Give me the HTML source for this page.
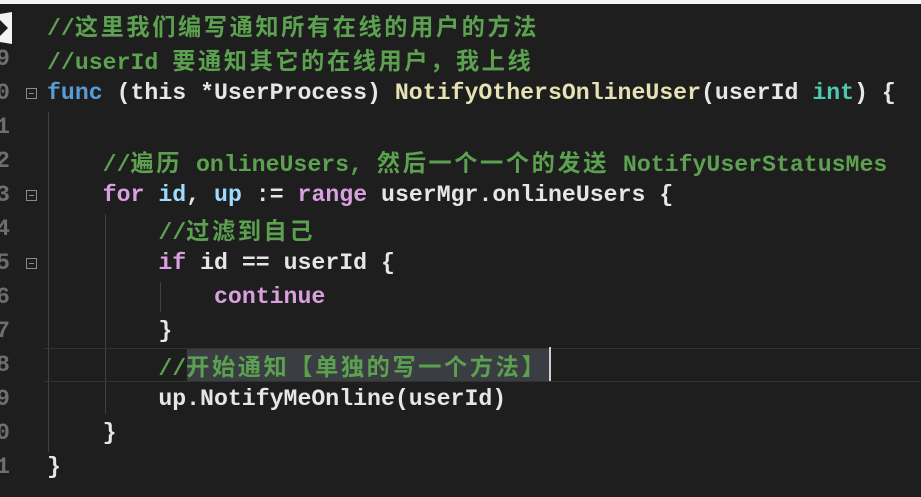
<!DOCTYPE html>
<html><head><meta charset="utf-8"><style>
html,body{margin:0;padding:0;}
body{width:921px;height:497px;background:#1e1e1e;position:relative;overflow:hidden;font-family:"Liberation Mono","Noto Sans CJK SC",monospace;font-size:23.2px;font-weight:bold;}
.top{position:absolute;left:0;top:0;width:921px;height:4px;background:#f4f4f4;}
.ln{position:absolute;left:-4px;width:14px;color:#6e6e6e;line-height:34px;height:34px;font-weight:bold;}
.l{position:absolute;left:47px;white-space:pre;line-height:34px;height:34px;color:#e6e6e6;}
.c{color:#5ca150}.cj{letter-spacing:2.6px;font-family:"Noto Sans CJK SC","Liberation Mono",sans-serif;font-weight:bold}
.k{color:#569cd6}.p{color:#d8a0df}.v{color:#9cdcfe}.f{color:#e6e2b4}.t{color:#4ec9b0}
.fold{position:absolute;left:26px;width:9px;height:9px;border:1px solid #8a8a8a;}
.fold:after{content:"";position:absolute;left:2px;top:4px;width:5px;height:1px;background:#8a8a8a;}
.g{position:absolute;width:1px;background:#404040;}
</style></head><body>
<div class="top"></div>
<svg style="position:absolute;left:0;top:12px" width="14" height="34"><polygon points="0,2 12,0 12,32 0,30" fill="#f4f4f4"/><polygon points="0,8 8,16 0,24" fill="#1e1e1e"/></svg>
<div class="ln" style="top:42px">9</div>
<div class="ln" style="top:76px">0</div>
<div class="ln" style="top:110px">1</div>
<div class="ln" style="top:144px">2</div>
<div class="ln" style="top:178px">3</div>
<div class="ln" style="top:212px">4</div>
<div class="ln" style="top:246px">5</div>
<div class="ln" style="top:280px">6</div>
<div class="ln" style="top:314px">7</div>
<div class="ln" style="top:348px">8</div>
<div class="ln" style="top:382px">9</div>
<div class="ln" style="top:416px">0</div>
<div class="ln" style="top:450px">1</div>
<div class="fold" style="top:88px"></div>
<div class="fold" style="top:190px"></div>
<div class="fold" style="top:258px"></div>
<div class="g" style="left:48px;top:112px;height:340px"></div>
<div class="g" style="left:105px;top:214px;height:200px"></div>
<div class="g" style="left:160px;top:282px;height:30px"></div>
<div style="position:absolute;left:44px;top:348px;width:880px;height:32px;border-top:1px solid #333;border-bottom:1px solid #333;"></div>
<div style="position:absolute;left:187px;top:349px;width:363px;height:32px;background:#3a3d41;"></div>
<div style="position:absolute;left:549px;top:347px;width:2px;height:34px;background:#cfcfcf;"></div>
<div class="l" style="top:8px"><span class="c">//<span class="cj">这里我们编写通知所有在线的用户的方法</span></span></div>
<div class="l" style="top:42px"><span class="c">//userId <span class="cj">要通知其它的在线用户，我上线</span></span></div>
<div class="l" style="top:76px"><span class="k">func</span> (this *UserProcess) <span class="f">NotifyOthersOnlineUser</span>(userId <span class="t">int</span>) {</div>
<div class="l" style="top:144px">    <span class="c">//<span class="cj">遍历</span> onlineUsers, <span class="cj">然后一个一个的发送</span> NotifyUserStatusMes</span></div>
<div class="l" style="top:178px">    <span class="p">for</span> <span class="v">id</span>, <span class="v">up</span> := <span class="p">range</span> userMgr.onlineUsers {</div>
<div class="l" style="top:212px">        <span class="c">//<span class="cj">过滤到自己</span></span></div>
<div class="l" style="top:246px">        <span class="p">if</span> id == userId {</div>
<div class="l" style="top:280px">            <span class="p">continue</span></div>
<div class="l" style="top:314px">        }</div>
<div class="l" style="top:348px">        <span class="c">//<span class="cj">开始通知【单独的写一个方法】</span></span></div>
<div class="l" style="top:382px">        up.NotifyMeOnline(userId)</div>
<div class="l" style="top:416px">    }</div>
<div class="l" style="top:450px">}</div>
</body></html>
